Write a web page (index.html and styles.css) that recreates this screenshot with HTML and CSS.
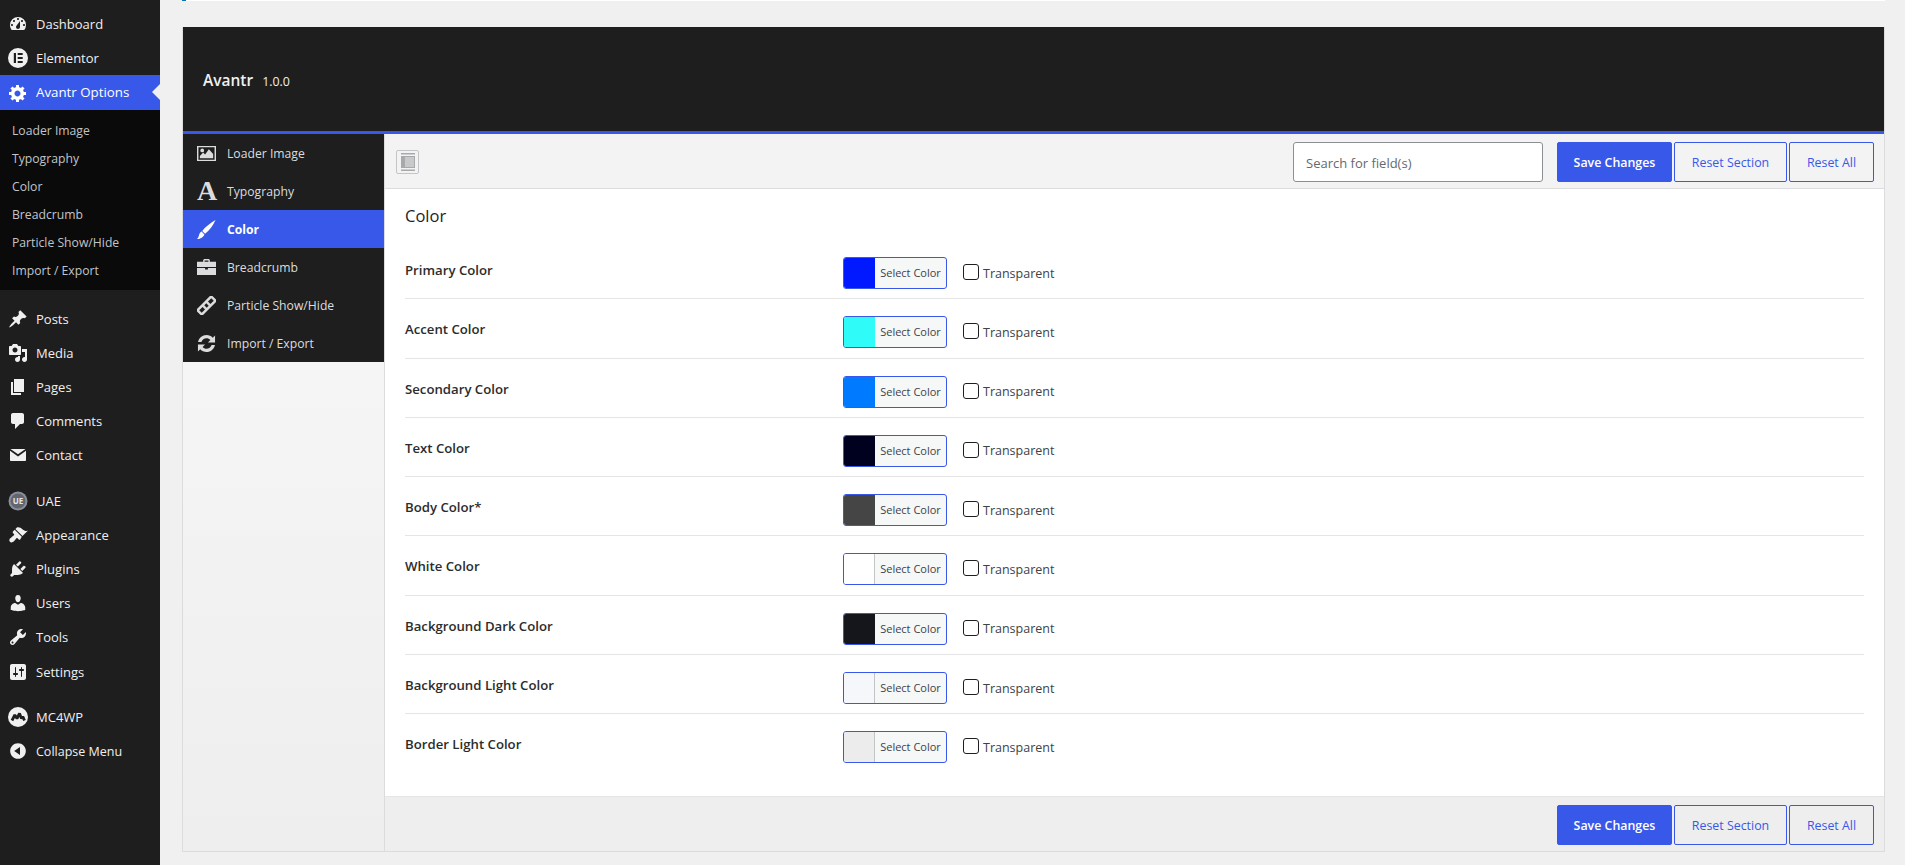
FILE: index.html
```html
<!DOCTYPE html>
<html lang="en">
<head>
    <meta charset="UTF-8">
    <meta name="viewport" content="width=device-width, initial-scale=1.0">
    <title>Avantr Options</title>
    <link rel="stylesheet" href="styles.css">
</head>
<body>

<!-- Admin menu -->
<aside class="admin-menu">
    <ul class="menu-list">
        <li class="menu-item"><svg class="menu-icon" viewBox="0 0 20 20"><path fill-rule="evenodd" d="M3.76 16h12.48A7.97 7.97 0 0 0 18 11a8 8 0 0 0-16 0c0 1.9.66 3.64 1.76 5zM10 4c.55 0 1 .45 1 1s-.45 1-1 1-1-.45-1-1 .45-1 1-1zM6 6c.55 0 1 .45 1 1s-.45 1-1 1-1-.45-1-1 .45-1 1-1zm8 0c.55 0 1 .45 1 1s-.45 1-1 1-1-.45-1-1 .45-1 1-1zm-5.37 5.55L12 7v6c0 1.1-.9 2-2 2s-2-.9-2-2c0-.57.24-1.08.63-1.45zM4 10c.55 0 1 .45 1 1s-.45 1-1 1-1-.45-1-1 .45-1 1-1zm12 0c.55 0 1 .45 1 1s-.45 1-1 1-1-.45-1-1 .45-1 1-1z"/></svg>Dashboard</li>
        <li class="menu-item"><svg class="menu-icon" viewBox="0 0 20 20"><path fill-rule="evenodd" d="M10 0a10 10 0 1 0 0 20 10 10 0 0 0 0-20zM5.800 5H8v10H5.800zM9.700 5h5v2h-5zM9.700 9h5v2h-5zM9.700 13h5v2h-5z"/></svg>Elementor</li>
        <li class="menu-item menu-item-active"><svg class="menu-icon" viewBox="0 0 20 20"><path fill-rule="evenodd" d="M18 12h-2.180c-.17.7-.44 1.350-.81 1.930l1.540 1.540-2.100 2.100-1.540-1.540c-.58.36-1.230.63-1.910.79V19H8v-2.180c-.68-.16-1.330-.43-1.910-.79l-1.540 1.540-2.120-2.120 1.540-1.540c-.36-.58-.63-1.230-.79-1.910H1V9.030h2.170c.16-.7.44-1.350.8-1.940L2.430 5.550l2.100-2.100 1.540 1.540c.58-.37 1.240-.64 1.930-.81V2h3v2.180c.68.16 1.330.43 1.910.79l1.540-1.540 2.120 2.120-1.540 1.540c.36.59.64 1.240.8 1.940H18V12zm-8.500 1.500c1.660 0 3-1.340 3-3s-1.340-3-3-3-3 1.340-3 3 1.340 3 3 3z"/></svg>Avantr Options</li>
    </ul>
    <ul class="sub-menu">
        <li>Loader Image</li>
        <li>Typography</li>
        <li>Color</li>
        <li>Breadcrumb</li>
        <li>Particle Show/Hide</li>
        <li>Import / Export</li>
    </ul>
    <ul class="menu-list menu-group">
        <li class="menu-item"><svg class="menu-icon" viewBox="0 0 20 20"><path d="M10.440 3.020l1.820-1.820 6.360 6.350-1.830 1.820c-1.050-.68-2.480-.57-3.410.36l-.75.75c-.92.93-1.040 2.350-.35 3.410l-1.830 1.820-2.410-2.410-2.800 2.790c-.42.42-3.380 2.710-3.800 2.290s1.860-3.390 2.280-3.810l2.790-2.790L4.100 9.360l1.830-1.820c1.050.69 2.480.57 3.400-.36l.75-.75c.93-.92 1.050-2.350.36-3.410z"/></svg>Posts</li>
        <li class="menu-item"><svg class="menu-icon" viewBox="0 0 20 20"><path fill-rule="evenodd" d="M13 11V4c0-.55-.45-1-1-1h-1.670L9 1H5L3.670 3H2c-.55 0-1 .45-1 1v7c0 .55.45 1 1 1h10c.55 0 1-.45 1-1zM7 4.500c1.380 0 2.500 1.120 2.500 2.500S8.380 9.500 7 9.500 4.500 8.380 4.500 7 5.620 4.500 7 4.500zM14 6h5v10.500c0 1.380-1.120 2.500-2.500 2.500S14 17.880 14 16.500s1.120-2.500 2.500-2.500c.17 0 .34.02.5.05V9h-3V6zm-4 8.050V13h2v3.500c0 1.380-1.120 2.500-2.500 2.500S7 17.880 7 16.500 8.120 14 9.500 14c.17 0 .34.02.5.05z"/></svg>Media</li>
        <li class="menu-item"><svg class="menu-icon" viewBox="0 0 20 20"><path d="M6 15V2h10v13H6zm-1 1h8v2H3V5h2v11z"/></svg>Pages</li>
        <li class="menu-item"><svg class="menu-icon" viewBox="0 0 20 20"><path d="M5 2h9c1.100 0 2 .9 2 2v7c0 1.100-.9 2-2 2h-2l-5 5v-5H5c-1.100 0-2-.9-2-2V4c0-1.100.9-2 2-2z"/></svg>Comments</li>
        <li class="menu-item"><svg class="menu-icon" viewBox="0 0 20 20"><path d="M2.500 4h15L10 9.300zM2 5.800l8 5.700 8-5.700V15c0 .6-.4 1-1 1H3c-.6 0-1-.4-1-1z"/></svg>Contact</li>
    </ul>
    <ul class="menu-list menu-group">
        <li class="menu-item"><svg class="menu-icon" viewBox="0 0 20 20"><circle cx="10" cy="10" r="9.500" fill="#8b8f9a"/><circle cx="10" cy="10" r="7.500" fill="#62666f"/><text class="uae-mark" x="10" y="12.800">UE</text></svg>UAE</li>
        <li class="menu-item"><svg class="menu-icon" viewBox="0 0 20 20"><path d="M14.480 11.060L7.410 3.990l1.500-1.500c.5-.56 2.300-.47 3.510.32 1.210.8 1.430 1.280 2.910 2.100 1.180.64 2.450 1.260 4.450.85zm-.71.71L6.700 4.700 4.930 6.470c-.39.39-.39 1.020 0 1.410l1.060 1.060c.39.39.39 1.030 0 1.420-.6.6-1.430 1.110-2.210 1.690-.35.26-.7.53-1.010.84C1.430 13.230.91 15.100 1.720 16.400c.8 1.280 2.680 1.300 4.030.2.31-.31.58-.66.84-1.010.58-.78 1.090-1.610 1.690-2.210.39-.39 1.030-.39 1.420 0l1.060 1.060c.39.39 1.020.39 1.410 0z"/></svg>Appearance</li>
        <li class="menu-item"><svg class="menu-icon" viewBox="0 0 20 20"><path d="M13.110 4.360L9.870 7.600 8 5.730l3.240-3.240c.35-.34 1.050-.2 1.560.32.52.51.66 1.210.31 1.550zm-8 1.770l.91-1.120 9.010 9.010-1.190.84c-.71.71-2.630 1.160-3.820 1.160H6.140L4.900 17.260c-.59.59-1.540.59-2.120 0-.59-.58-.59-1.530 0-2.120l1.240-1.240v-3.880c0-1.130.4-3.190 1.090-3.890zm7.260 3.970l3.240-3.240c.34-.35 1.040-.21 1.550.31.52.51.66 1.210.31 1.550l-3.240 3.250z"/></svg>Plugins</li>
        <li class="menu-item"><svg class="menu-icon" viewBox="0 0 20 20"><path d="M10 9.250c-2.270 0-2.730-3.440-2.730-3.440C7 4.020 7.820 2 9.970 2c2.160 0 2.980 2.020 2.710 3.810 0 0-.41 3.440-2.680 3.440zm0 2.570L12.720 10c2.390 0 4.520 2.330 4.520 4.530v2.490s-3.650 1.130-7.240 1.130c-3.650 0-7.240-1.130-7.240-1.130v-2.490c0-2.250 1.940-4.480 4.470-4.480z"/></svg>Users</li>
        <li class="menu-item"><svg class="menu-icon" viewBox="0 0 20 20"><path fill-rule="evenodd" d="M16.680 9.770c-1.340 1.340-3.300 1.670-4.950.99l-5.410 6.520c-.99.99-2.590.99-3.580 0s-.99-2.590 0-3.570l6.520-5.420c-.68-1.650-.35-3.610.99-4.950 1.280-1.280 3.120-1.620 4.720-1.060l-2.890 2.890 2.820 2.820 2.860-2.870c.53 1.580.18 3.390-1.080 4.650zM3.810 16.210c.4.39 1.040.39 1.430 0 .4-.4.4-1.040 0-1.430-.39-.4-1.030-.4-1.430 0-.39.39-.39 1.030 0 1.430z"/></svg>Tools</li>
        <li class="menu-item menu-item-settings"><svg class="menu-icon" viewBox="0 0 20 20"><path fill-rule="evenodd" d="M18 16V4c0-1.100-.9-2-2-2H4c-1.100 0-2 .9-2 2v12c0 1.100.9 2 2 2h12c1.100 0 2-.9 2-2zM8 11h1c.55 0 1 .45 1 1s-.45 1-1 1H8v1.500c0 .28-.22.5-.5.5s-.5-.22-.5-.5V13H6c-.55 0-1-.45-1-1s.45-1 1-1h1V5.500c0-.28.22-.5.5-.5s.5.22.5.5V11zm5-2h-1c-.55 0-1-.45-1-1s.45-1 1-1h1V5.500c0-.28.22-.5.5-.5s.5.22.5.5V7h1c.55 0 1 .45 1 1s-.45 1-1 1h-1v5.500c0 .28-.22.5-.5.5s-.5-.22-.5-.5V9z"/></svg>Settings</li>
    </ul>
    <ul class="menu-list menu-group">
        <li class="menu-item"><svg class="menu-icon" viewBox="0 0 20 20"><circle cx="10" cy="10" r="10"/><polyline class="mc-mark" points="4,13.500 6.800,8 9,11.500 11.500,6.500 13.500,11.500 14.800,9.500 16.500,13.500"/></svg>MC4WP</li>
        <li class="menu-item menu-item-collapse"><svg class="menu-icon" viewBox="0 0 20 20"><path fill-rule="evenodd" d="M10 2.160c4.330 0 7.840 3.510 7.840 7.840s-3.510 7.840-7.840 7.840S2.160 14.330 2.160 10 5.710 2.160 10 2.160zm2 11.720V6.120L6.180 9.970z"/></svg>Collapse Menu</li>
    </ul>
</aside>

<main class="page">
    <div class="notice-strip"></div>

    <div class="panel">
        <header class="panel-head">
            <h1>Avantr</h1>
            <span class="version">1.0.0</span>
        </header>

        <div class="panel-body">
            <!-- Section tabs -->
            <nav class="tabs">
                <ul>
                    <li class="tab"><svg class="tab-icon" viewBox="0 0 20 20"><path fill-rule="evenodd" d="M0 2h20v16H0zM1.500 3.500v13h17v-13zM3 15v-2.500l3.500-3.500 2 2 4-5.500 4.500 5V15zM5.500 4.800a2 2 0 1 1 0 4 2 2 0 0 1 0-4z"/></svg>Loader Image</li>
                    <li class="tab"><span class="tab-letter">A</span>Typography</li>
                    <li class="tab tab-active"><svg class="tab-icon" viewBox="0 0 20 20"><path d="M19.500 0C17 6 13 11 8.500 14.500l-3-3C9 7 14.500 3 19.500 0zM4.800 12.200l3 3C7 18 3.500 20 0 20c2-1.500 1.800-3.700 2.500-5.200.5-1.200 1.300-2.200 2.300-2.600z"/></svg>Color</li>
                    <li class="tab"><svg class="tab-icon" viewBox="0 0 20 20"><path fill-rule="evenodd" d="M6.500 4V2.500C6.500 1.700 7.200 1 8 1h4c.8 0 1.500.7 1.500 1.500V4H20v5.500H0V4zM8 2.500V4h4V2.500zM0 10.500h8.500V12h3v-1.500H20V18H0z"/></svg>Breadcrumb</li>
                    <li class="tab"><svg class="tab-icon" viewBox="0 0 20 20"><g transform="rotate(-45 10 10)"><rect x="-1.500" y="5.500" width="23" height="9" rx="1.500"/><rect class="link-hole" x="1" y="8.200" width="5" height="3.600"/><rect class="link-hole" x="14" y="8.200" width="5" height="3.600"/><rect class="link-hole" x="8.500" y="8.200" width="3" height="3.600"/></g></svg>Particle Show/Hide</li>
                    <li class="tab"><svg class="tab-icon" viewBox="0 0 20 20"><path d="M10 1c2.600 0 5 1.100 6.600 2.900L19 1.500V9h-7.500l2.600-2.600C13 5.200 11.600 4.500 10 4.500c-2.500 0-4.600 1.700-5.300 4H1.100C1.900 4.300 5.600 1 10 1zM1 11h7.500l-2.600 2.600c1.100 1.200 2.500 1.900 4.100 1.900 2.500 0 4.600-1.700 5.300-4h3.600C18.100 15.700 14.400 19 10 19c-2.600 0-5-1.100-6.600-2.900L1 18.500z"/></svg>Import / Export</li>
                </ul>
            </nav>

            <section class="main-col">
                <div class="toolbar">
                    <button class="expand-btn" type="button"><svg viewBox="0 0 14 18"><path d="M0 0h14v1.500H0zM0 16.500h14V18H0zM0 3h14v12H0z" fill="#a7aaad"/><path d="M4 4h9v10H4z" fill="#c8c9cb"/></svg></button>
                    <input class="search" type="text" placeholder="Search for field(s)">
                    <div class="actions">
                        <button class="btn btn-primary" type="button">Save Changes</button>
                        <button class="btn btn-outline btn-section" type="button">Reset Section</button>
                        <button class="btn btn-outline btn-all" type="button">Reset All</button>
                    </div>
                </div>

                <div class="fields">
                    <h2>Color</h2>

                    <div class="field">
                        <label>Primary Color</label>
                        <div class="control"><span class="picker"><span class="swatch swatch-primary"></span><span class="picker-text">Select Color</span></span><span class="check"></span><span class="check-label">Transparent</span></div>
                    </div>
                    <div class="field">
                        <label>Accent Color</label>
                        <div class="control"><span class="picker"><span class="swatch swatch-accent"></span><span class="picker-text">Select Color</span></span><span class="check"></span><span class="check-label">Transparent</span></div>
                    </div>
                    <div class="field">
                        <label>Secondary Color</label>
                        <div class="control"><span class="picker"><span class="swatch swatch-secondary"></span><span class="picker-text">Select Color</span></span><span class="check"></span><span class="check-label">Transparent</span></div>
                    </div>
                    <div class="field">
                        <label>Text Color</label>
                        <div class="control"><span class="picker"><span class="swatch swatch-text"></span><span class="picker-text">Select Color</span></span><span class="check"></span><span class="check-label">Transparent</span></div>
                    </div>
                    <div class="field">
                        <label>Body Color*</label>
                        <div class="control"><span class="picker"><span class="swatch swatch-body"></span><span class="picker-text">Select Color</span></span><span class="check"></span><span class="check-label">Transparent</span></div>
                    </div>
                    <div class="field">
                        <label>White Color</label>
                        <div class="control"><span class="picker"><span class="swatch swatch-white"></span><span class="picker-text">Select Color</span></span><span class="check"></span><span class="check-label">Transparent</span></div>
                    </div>
                    <div class="field">
                        <label>Background Dark Color</label>
                        <div class="control"><span class="picker"><span class="swatch swatch-dark"></span><span class="picker-text">Select Color</span></span><span class="check"></span><span class="check-label">Transparent</span></div>
                    </div>
                    <div class="field">
                        <label>Background Light Color</label>
                        <div class="control"><span class="picker"><span class="swatch swatch-light"></span><span class="picker-text">Select Color</span></span><span class="check"></span><span class="check-label">Transparent</span></div>
                    </div>
                    <div class="field field-last">
                        <label>Border Light Color</label>
                        <div class="control"><span class="picker"><span class="swatch swatch-border"></span><span class="picker-text">Select Color</span></span><span class="check"></span><span class="check-label">Transparent</span></div>
                    </div>
                </div>

                <div class="panel-foot">
                    <button class="btn btn-primary" type="button">Save Changes</button>
                    <button class="btn btn-outline btn-section" type="button">Reset Section</button>
                    <button class="btn btn-outline btn-all" type="button">Reset All</button>
                </div>
            </section>
        </div>
    </div>
</main>

</body>
</html>
```

FILE: styles.css
```css
/* General styles */
* {
    box-sizing: border-box;
}

body {
    font-family: "Open Sans", "Noto Sans", Arial, sans-serif;
    background-color: #f0f0f1;
    color: #1e1e1e;
    margin: 0;
    height: 865px;
    overflow: hidden;
    display: flex;
}

ul {
    list-style: none;
    margin: 0;
    padding: 0;
}

/* Admin menu */
.admin-menu {
    width: 160px;
    flex-shrink: 0;
    background-color: #1e1e1e;
    padding-top: 7px;
}

.menu-group {
    margin-top: 12px;
}

.menu-item {
    display: flex;
    align-items: center;
    height: 34px;
    padding-left: 8px;
    font-size: 13px;
    color: #f0f0f1;
    position: relative;
}

.menu-icon {
    width: 20px;
    height: 20px;
    margin-right: 8px;
    fill: #f0f0f1;
    flex-shrink: 0;
}

.menu-item-active {
    height: 35px;
    padding-bottom: 2px;
    font-size: 13.300px;
    background-color: #3858e9;
    color: #fff;
}

.menu-item-active .menu-icon {
    fill: #fff;
    margin-top: 2px;
}

.menu-item-active::after {
    content: "";
    position: absolute;
    right: 0;
    top: 9px;
    border: 8px solid transparent;
    border-right-color: #f0f0f1;
    border-left-width: 0;
}

.menu-item-settings {
    padding-top: 2px;
}

.menu-item-collapse {
    font-size: 12.500px;
}

.uae-mark {
    font-size: 8px;
    font-weight: 700;
    fill: #e6e7e9;
    text-anchor: middle;
}

.mc-mark {
    fill: none;
    stroke: #1e1e1e;
    stroke-width: 2.800;
    stroke-linejoin: bevel;
}

.sub-menu {
    background-color: #0a0a0a;
    padding: 7px 0 5px;
}

.sub-menu li {
    height: 28px;
    line-height: 28px;
    padding-left: 12px;
    font-size: 12.200px;
    color: #c3c4c7;
}

/* Options page */
.page {
    flex: 1;
    min-width: 0;
    padding: 0 20px 0 22px;
}

.notice-strip {
    height: 1px;
    margin: 0 0 26px;
    background-color: #fff;
    border-left: 4px solid #0a75ad;
}

.panel {
    height: 825px;
    border: 1px solid #dcdcde;
    border-top: none;
    display: flex;
    flex-direction: column;
    background: linear-gradient(#fafafa, #eeeeee);
}

.panel-head {
    height: 107px;
    flex-shrink: 0;
    background-color: #1e1e1e;
    border-bottom: 3px solid #3858e9;
    display: flex;
    align-items: center;
    gap: 9px;
    padding: 2px 20px 0;
    color: #f0f0f1;
}

.panel-head h1 {
    margin: 0;
    font-size: 15.500px;
    font-weight: 600;
}

.version {
    font-size: 12.400px;
    padding-top: 2px;
}

.panel-body {
    flex: 1;
    display: flex;
    min-height: 0;
}

/* Section tabs */
.tabs {
    width: 201px;
    flex-shrink: 0;
}

.tabs ul {
    background-color: #1e1e1e;
}

.tab {
    display: flex;
    align-items: center;
    height: 38px;
    padding-left: 14px;
    font-size: 12.200px;
    color: #dcdcde;
}

.tab-icon {
    width: 19px;
    height: 19px;
    margin-right: 11px;
    fill: #dcdcde;
    flex-shrink: 0;
}

.link-hole {
    fill: #1e1e1e;
}

.tab-letter {
    width: 19px;
    margin-right: 11px;
    font-family: "Liberation Serif", serif;
    font-size: 28px;
    font-weight: 700;
    line-height: 1;
    text-align: center;
}

.tab-active {
    background-color: #3858e9;
    color: #fff;
    font-weight: 700;
}

.tab-active .tab-icon {
    fill: #fff;
}

/* Main column */
.main-col {
    flex: 1;
    min-width: 0;
    display: flex;
    flex-direction: column;
    border-left: 1px solid #dcdcde;
}

.toolbar {
    height: 55px;
    flex-shrink: 0;
    background-color: #f3f3f3;
    border-bottom: 1px solid #dcdcde;
    display: flex;
    align-items: flex-start;
    padding: 8px 10px 0 11px;
}

.expand-btn {
    width: 23px;
    height: 24px;
    margin-top: 8px;
    padding: 0;
    background-color: #f3f3f3;
    border: 1px solid #c3c4c7;
    border-radius: 2px;
    display: flex;
    align-items: center;
    justify-content: center;
}

.expand-btn svg {
    width: 14px;
    height: 18px;
}

.search {
    width: 250px;
    height: 40px;
    margin-left: auto;
    padding: 2px 12px 0;
    font-family: inherit;
    font-size: 13px;
    background-color: #fff;
    border: 1px solid #8c8f94;
    border-radius: 3px;
}

.search::placeholder {
    color: #646970;
}

.actions,
.panel-foot {
    display: flex;
    gap: 2px;
}

.actions {
    margin-left: 14px;
}

.btn {
    height: 40px;
    font-family: inherit;
    font-size: 12.400px;
    border-radius: 2px;
    padding: 1px 0 0;
}

.btn-primary {
    width: 115px;
    background-color: #3858e9;
    border: 1px solid #3858e9;
    color: #fff;
    font-weight: 600;
}

.btn-outline {
    background-color: transparent;
    border: 1px solid #3858e9;
    color: #3858e9;
}

.btn-section {
    width: 113px;
}

.btn-all {
    width: 85px;
}

/* Fields */
.fields {
    flex: 1;
    background-color: #fff;
    padding: 0 20px;
}

.fields h2 {
    margin: 0;
    height: 51px;
    padding-top: 16px;
    font-size: 16.500px;
    font-weight: 500;
    line-height: 22px;
}

.field {
    display: flex;
    height: 59.300px;
    border-bottom: 1px solid #e5e5e5;
    padding-top: 17px;
}

.field-last {
    border-bottom: none;
}

.field label {
    width: 438px;
    flex-shrink: 0;
    font-size: 13.200px;
    font-weight: 600;
    color: #2c2c2c;
    line-height: 26px;
}

.control {
    display: flex;
    align-items: center;
    height: 32px;
}

.picker {
    display: flex;
    width: 104px;
    height: 32px;
    border: 1px solid #3858e9;
    border-radius: 3px;
    overflow: hidden;
    background-color: #f6f7f7;
}

.swatch {
    width: 31px;
    flex-shrink: 0;
}

.swatch-primary { background-color: #0019ff; }
.swatch-accent { background-color: #2ffcf9; }
.swatch-secondary { background-color: #007bff; }
.swatch-text { background-color: #00001f; }
.swatch-body { background-color: #454545; }
.swatch-white { background-color: #fff; border-right: 1px solid #c3c4c7; }
.swatch-dark { background-color: #14161b; }
.swatch-light { background-color: #f5f7fb; border-right: 1px solid #c3c4c7; }
.swatch-border { background-color: #ececec; border-right: 1px solid #c3c4c7; }

.picker-text {
    flex: 1;
    text-align: center;
    font-size: 11px;
    line-height: 30px;
    color: #3c434a;
}

.check {
    width: 16px;
    height: 16px;
    margin: 0 0 2px 16px;
    border: 1px solid #1e1e1e;
    border-radius: 3px;
    background-color: #fff;
}

.check-label {
    margin-left: 4px;
    font-size: 12.500px;
    color: #3c434a;
}

/* Bottom bar */
.panel-foot {
    height: 55px;
    flex-shrink: 0;
    background-color: #eeeeee;
    border-top: 1px solid #e5e5e5;
    justify-content: flex-end;
    align-items: flex-start;
    padding: 8px 10px 0 0;
}
```
